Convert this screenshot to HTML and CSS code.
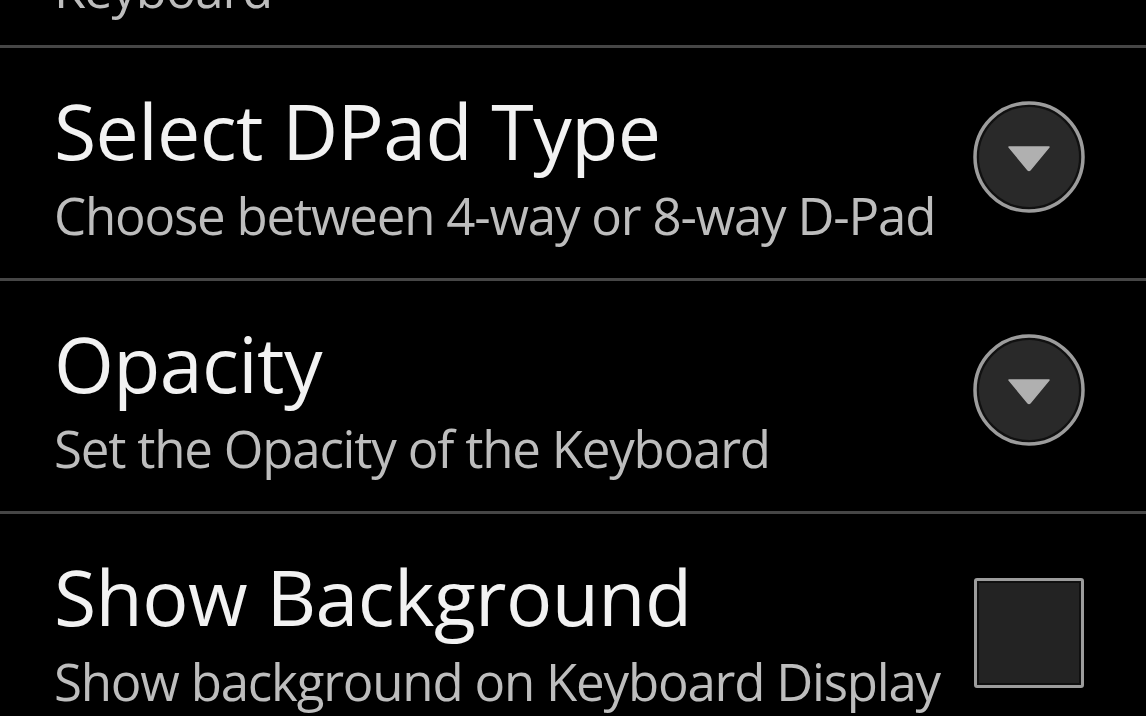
FILE: index.html
```html
<!DOCTYPE html>
<html lang="en">
<head>
<meta charset="utf-8">
<title>Keyboard Settings</title>
<link rel="stylesheet" href="styles.css">
</head>
<body>
<div class="list">
  <div class="row partial">
    <div class="text">
      <div class="summary">Keyboard</div>
    </div>
  </div>

  <div class="row">
    <div class="text">
      <div class="title">Select DPad Type</div>
      <div class="summary">Choose between 4-way or 8-way D-Pad</div>
    </div>
    <div class="widget spinner">
      <svg width="112" height="112" viewBox="0 0 112 112">
        <circle cx="56" cy="56" r="54" fill="#101010" stroke="#9c9c9c" stroke-width="3.5"/>
        <circle cx="56" cy="56" r="50" fill="#292929"/>
        <path d="M36 46 L76 46 L57 69 Q56 70 55 69 Z" fill="#b0b0b0" stroke="#b0b0b0" stroke-width="1.5" stroke-linejoin="round"/>
      </svg>
    </div>
  </div>

  <div class="row">
    <div class="text">
      <div class="title">Opacity</div>
      <div class="summary">Set the Opacity of the Keyboard</div>
    </div>
    <div class="widget spinner">
      <svg width="112" height="112" viewBox="0 0 112 112">
        <circle cx="56" cy="56" r="54" fill="#101010" stroke="#9c9c9c" stroke-width="3.5"/>
        <circle cx="56" cy="56" r="50" fill="#292929"/>
        <path d="M36 46 L76 46 L57 69 Q56 70 55 69 Z" fill="#b0b0b0" stroke="#b0b0b0" stroke-width="1.5" stroke-linejoin="round"/>
      </svg>
    </div>
  </div>

  <div class="row">
    <div class="text">
      <div class="title">Show Background</div>
      <div class="summary">Show background on Keyboard Display</div>
    </div>
    <div class="widget check">
      <div class="box"></div>
    </div>
  </div>
</div>
</body>
</html>
```

FILE: styles.css
```css
html, body {
  margin: 0;
  padding: 0;
  background: #000;
}

body {
  width: 1146px;
  height: 716px;
  overflow: hidden;
  font-family: "Open Sans", "DejaVu Sans", sans-serif;
}

.list {
  display: flex;
  flex-direction: column;
}

.row {
  display: flex;
  align-items: flex-start;
  justify-content: space-between;
  height: 233px;
  padding: 44px 61px 0 54px;
  box-sizing: border-box;
  border-top: 3px solid #464646;
  flex-shrink: 0;
}

.row.partial {
  border-top: none;
  height: 45px;
  padding: 0 61px 31px 54px;
  align-items: flex-end;
  overflow: hidden;
}

.text {
  display: flex;
  flex-direction: column;
  gap: 21px;
}

.title {
  font-size: 77px;
  line-height: 77px;
  letter-spacing: -0.6px;
  color: #f2f2f2;
  white-space: nowrap;
}

.summary {
  font-size: 51px;
  line-height: 51px;
  letter-spacing: -1.2px;
  color: #bdbdbd;
  white-space: nowrap;
}

.widget {
  width: 112px;
  flex-shrink: 0;
  display: flex;
  justify-content: center;
}

.widget svg {
  display: block;
}

.spinner {
  margin-top: 9px;
}

.check {
  margin-top: 20px;
}

.box {
  width: 104px;
  height: 104px;
  border: 3px solid #9c9c9c;
  border-radius: 3px;
  background: #232323;
  box-shadow: inset 0 0 0 2px #101010;
}
```
